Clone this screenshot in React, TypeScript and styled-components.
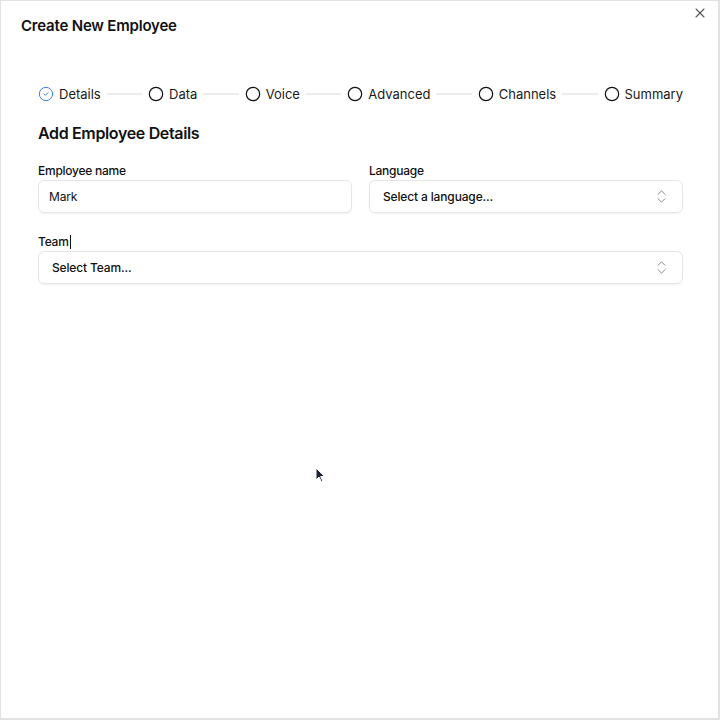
import styled, { createGlobalStyle } from "styled-components";
import { Circle, CircleCheck, ChevronsUpDown, X } from "lucide-react";

const GlobalStyle = createGlobalStyle`
*{box-sizing:border-box;}
body{
    margin:0;
    background:#fff;
    font-family:Inter, "Noto Sans", sans-serif;
    color:#111;
}
`;

const Dialog = styled.div`
position:relative;
width:720px;
height:720px;
border:1px solid #e2e2e2;
border-right-width:2px;
border-bottom-width:2px;
background:#fff;
`;

const Header = styled.div`
padding:13px 20px 0;
`;

const Title = styled.h2`
margin:0;
font-size:15px;
line-height:24px;
font-weight:600;
letter-spacing:-0.2px;
`;

const CloseButton = styled.button`
position:absolute;
top:4px;
right:10px;
width:16px;
height:16px;
padding:0;
border:none;
background:none;
color:#555;
display:flex;
`;

const Body = styled.div`
padding:0 35px 0 37px;
`;

const Stepper = styled.div`
display:flex;
align-items:center;
margin-top:46px;
height:20px;
`;

const Step = styled.div<{active?:boolean}>`
display:flex;
align-items:center;
gap:5px;
font-size:13px;
line-height:20px;
color:#1a1a1a;
white-space:nowrap;
svg{
    color:${(p)=>p.active ? "#3b7fe0" : "#111"};
    flex-shrink:0;
}
`;

const Connector = styled.div`
flex:1;
height:2px;
margin:0 6px;
background:#ececec;
`;

const Heading = styled.h3`
margin:15px 0 0;
font-size:16px;
line-height:28px;
font-weight:600;
letter-spacing:-0.35px;
`;

const FormGrid = styled.div`
display:grid;
grid-template-columns:1fr 1fr;
column-gap:17px;
row-gap:20px;
margin-top:15px;
`;

const Field = styled.div<{wide?:boolean}>`
display:flex;
flex-direction:column;
grid-column:${(p)=>p.wide ? "1 / -1" : "auto"};
`;

const Label = styled.label`
font-size:12px;
line-height:18px;
font-weight:500;
letter-spacing:-0.25px;
color:#111;
display:flex;
align-items:center;
`;

const Caret = styled.span`
display:inline-block;
width:1px;
height:14px;
margin-left:1px;
background:#111;
`;

const TextInput = styled.div`
height:33px;
display:flex;
align-items:center;
padding:0 10px;
border:1px solid #e6e6e6;
border-radius:6px;
box-shadow:0 1px 2px rgba(0,0,0,0.05);
font-size:12px;
letter-spacing:-0.15px;
color:#111;
`;

const SelectBox = styled.div`
height:33px;
display:flex;
align-items:center;
justify-content:space-between;
padding:0 12px 0 13px;
border:1px solid #e6e6e6;
border-radius:6px;
box-shadow:0 1px 2px rgba(0,0,0,0.05);
font-size:12px;
font-weight:500;
letter-spacing:-0.15px;
color:#111;
svg{
    color:#888;
}
`;

const Pointer = styled.svg`
position:absolute;
left:314px;
top:466px;
`;

const steps = ["Details","Data","Voice","Advanced","Channels","Summary"];

function App(){
    return (
        <>
            <GlobalStyle/>
            <Dialog>
                <Header>
                    <Title>Create New Employee</Title>
                </Header>
                <CloseButton aria-label="Close">
                    <X size={16} strokeWidth={1.6}/>
                </CloseButton>
                <Body>
                    <Stepper>
                        {steps.map((s,i)=>(
                            <>
                                {i>0 && <Connector key={"c"+i}/>}
                                <Step key={s} active={i===0}>
                                    {i===0 ? <CircleCheck size={16} strokeWidth={1.5}/> : <Circle size={16} strokeWidth={1.8}/>}
                                    {s}
                                </Step>
                            </>
                        ))}
                    </Stepper>
                    <Heading>Add Employee Details</Heading>
                    <FormGrid>
                        <Field>
                            <Label>Employee name</Label>
                            <TextInput>Mark</TextInput>
                        </Field>
                        <Field>
                            <Label>Language</Label>
                            <SelectBox>
                                Select a language...
                                <ChevronsUpDown size={17} strokeWidth={1.4}/>
                            </SelectBox>
                        </Field>
                        <Field wide>
                            <Label>Team<Caret/></Label>
                            <SelectBox>
                                Select Team...
                                <ChevronsUpDown size={17} strokeWidth={1.4}/>
                            </SelectBox>
                        </Field>
                    </FormGrid>
                </Body>
                <Pointer width="10" height="16" viewBox="0 0 10 16">
                    <path d="M1 1 L1 13 L4 10 L6.5 15 L8 14.3 L5.6 9.5 L9.5 9.5 Z" fill="#1c2433" stroke="#fff" strokeWidth="1"/>
                </Pointer>
            </Dialog>
        </>
    );
}

export default App;
